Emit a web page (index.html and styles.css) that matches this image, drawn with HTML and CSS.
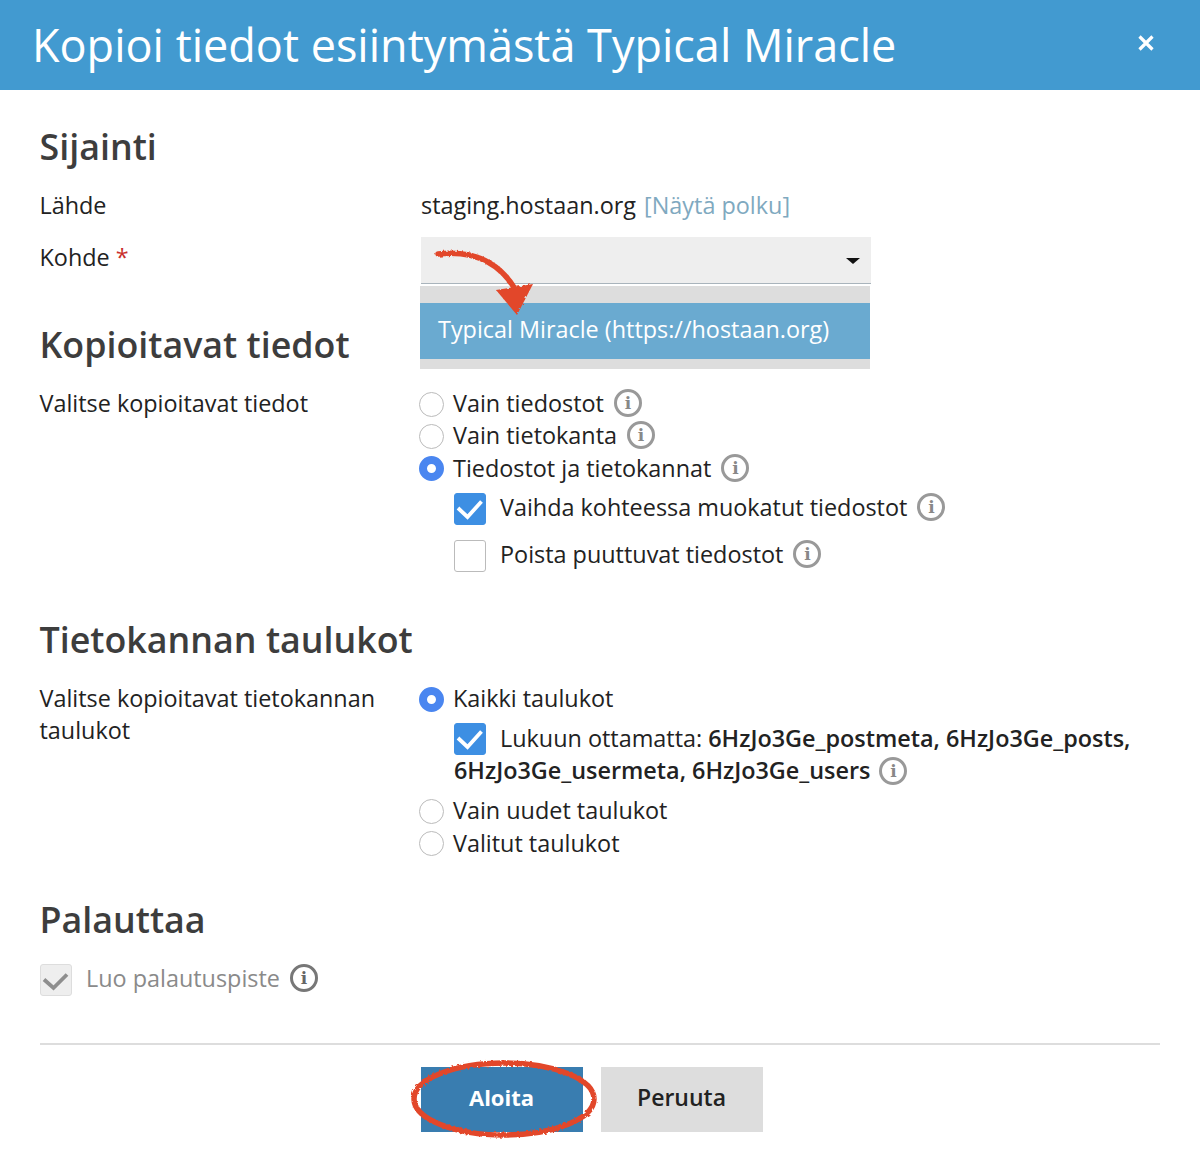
FILE: index.html
```html
<!DOCTYPE html>
<html lang="fi">
<head>
    <meta charset="UTF-8">
    <meta name="viewport" content="width=device-width, initial-scale=1.0">
    <title>Kopioi tiedot</title>
    <link rel="stylesheet" href="styles.css">
</head>
<body>
    <svg class="defs" width="0" height="0">
        <filter id="rough" x="-10%" y="-10%" width="120%" height="120%">
            <feTurbulence type="fractalNoise" baseFrequency="0.35" numOctaves="2" seed="4"/>
            <feDisplacementMap in="SourceGraphic" scale="3.500"/>
        </filter>
    </svg>
    <div class="modal">
        <header class="modal-head">
            <h1>Kopioi tiedot esiintymästä Typical Miracle</h1>
            <svg class="close" width="18" height="18" viewBox="0 0 18 18"><path d="M2.5 2.5l13 13M15.5 2.500l-13 13" stroke="#fff" stroke-width="3.200" fill="none"/></svg>
        </header>

        <div class="modal-body">
            <h2 class="first">Sijainti</h2>
            <div class="row source-row">
                <div class="label">Lähde</div>
                <div class="value">staging.hostaan.org <a class="path-link">[Näytä polku]</a></div>
            </div>
            <div class="row target-row">
                <div class="label">Kohde <span class="req">*</span></div>
                <div class="value">
                    <div class="select">
                        <span class="caret"></span>
                        <div class="dropdown">
                            <div class="option">Typical Miracle (https://hostaan.org)</div>
                        </div>
                        <svg class="arrow" width="110" height="84" viewBox="0 0 110 84">
                            <g filter="url(#rough)">
                                <path d="M7 15C35 12 65 18 84 50" stroke="#e2472a" stroke-width="5.500" stroke-linecap="round" fill="none"/>
                                <path d="M65 51L102 45L86 76Z" fill="#e2472a"/>
                            </g>
                        </svg>
                    </div>
                </div>
            </div>

            <h2 class="copy-head">Kopioitavat tiedot</h2>
            <div class="row">
                <div class="label">Valitse kopioitavat tiedot</div>
                <div class="value">
                    <div class="radio-line"><span class="radio"></span>Vain tiedostot<span class="info">i</span></div>
                    <div class="radio-line"><span class="radio"></span>Vain tietokanta<span class="info">i</span></div>
                    <div class="radio-line"><span class="radio on"></span>Tiedostot ja tietokannat<span class="info">i</span></div>
                    <div class="check-line">
                        <span class="check on"><svg width="32" height="32" viewBox="0 0 32 32"><path d="M4 15l9.500 9L27.500 8.500" stroke="#fff" stroke-width="3.800" fill="none"/></svg></span>
                        Vaihda kohteessa muokatut tiedostot<span class="info">i</span>
                    </div>
                    <div class="check-line">
                        <span class="check"></span>
                        Poista puuttuvat tiedostot<span class="info">i</span>
                    </div>
                </div>
            </div>

            <h2 class="tables-head">Tietokannan taulukot</h2>
            <div class="row">
                <div class="label">Valitse kopioitavat tietokannan taulukot</div>
                <div class="value">
                    <div class="radio-line"><span class="radio on"></span>Kaikki taulukot</div>
                    <div class="except">
                        <span class="check on"><svg width="32" height="32" viewBox="0 0 32 32"><path d="M4 15l9.500 9L27.500 8.500" stroke="#fff" stroke-width="3.800" fill="none"/></svg></span>Lukuun ottamatta: <b>6HzJo3Ge_postmeta, 6HzJo3Ge_posts,</b> <b>6HzJo3Ge_usermeta, 6HzJo3Ge_users</b><span class="info">i</span>
                    </div>
                    <div class="radio-line"><span class="radio"></span>Vain uudet taulukot</div>
                    <div class="radio-line"><span class="radio"></span>Valitut taulukot</div>
                </div>
            </div>

            <h2 class="restore-head">Palauttaa</h2>
            <div class="check-line disabled">
                <span class="check off"><svg width="32" height="32" viewBox="0 0 32 32"><path d="M4 15.500l9.500 8.500L27 10.500" stroke="#8e8e8e" stroke-width="3.800" fill="none"/></svg></span>
                Luo palautuspiste<span class="info">i</span>
            </div>
        </div>

        <footer class="modal-foot">
            <div class="start-wrap">
                <button class="btn primary">Aloita</button>
                <svg class="ring" width="192" height="84" viewBox="0 0 192 84">
                    <ellipse cx="96" cy="41" rx="90" ry="36" stroke="#e2472a" stroke-width="5.500" fill="none" filter="url(#rough)"/>
                </svg>
            </div>
            <button class="btn">Peruuta</button>
        </footer>
    </div>
</body>
</html>
```

FILE: styles.css
```css
*{
    margin: 0;
    padding: 0;
    box-sizing: border-box;
    font-family: 'Open Sans', sans-serif;
}
body{
    background-color: #fff;
    color: #222;
}
.defs{
    position: absolute;
}
.modal{
    width: 1200px;
    height: 1164px;
}
.modal-head{
    height: 90px;
    background-color: #429ad0;
    color: #fff;
    display: flex;
    justify-content: space-between;
    align-items: center;
    padding: 0 45px 2px 32px;
}
.modal-head h1{
    font-weight: 400;
    font-size: 45px;
}
.close{
    margin-bottom: 2px;
}
.modal-body{
    padding: 0 40px 0 39.500px;
}
h2{
    font-size: 35.800px;
    line-height: 48px;
    font-weight: 600;
    color: #3d3d3d;
}
h2.first{
    margin-top: 32px;
    margin-bottom: 19px;
}
h2.copy-head{
    margin-top: 32px;
    margin-bottom: 19px;
}
h2.tables-head{
    margin-top: 37px;
    margin-bottom: 19px;
}
h2.restore-head{
    margin-top: 36px;
    margin-bottom: 12px;
}
.row{
    display: flex;
    font-size: 23.400px;
    line-height: 32px;
}
.source-row{
    height: 52px;
}
.target-row{
    height: 47px;
}
.label{
    width: 381.500px;
    flex-shrink: 0;
    padding-right: 20px;
}
.value{
    flex: 1;
}
.path-link{
    color: #7fa9c0;
    margin-left: 2px;
}
.req{
    color: #c9302c;
}
.select{
    position: relative;
    width: 450px;
    height: 47px;
    margin-top: -4px;
    background-color: #eee;
    border-bottom: 1px solid #a9b4bc;
}
.caret{
    position: absolute;
    right: 11px;
    top: 21px;
    border-left: 7px solid transparent;
    border-right: 7px solid transparent;
    border-top: 6px solid #111;
}
.dropdown{
    position: absolute;
    left: -1px;
    top: 49px;
    width: 450px;
    height: 83px;
    padding: 17px 0 10px;
    background-color: #ddd;
}
.option{
    height: 56px;
    line-height: 53px;
    padding-left: 18px;
    background-color: #6aaad0;
    color: #fff;
}
.arrow{
    position: absolute;
    left: 10px;
    top: 2px;
}
.radio-line{
    display: flex;
    align-items: center;
    height: 32.300px;
}
.radio{
    width: 25px;
    height: 25px;
    border-radius: 50%;
    border: 1px solid #bbb;
    background-color: #fff;
    margin: 2px 9px 0 -2px;
    flex-shrink: 0;
}
.radio.on{
    border: 8px solid #4a86f0;
}
.info{
    display: inline-block;
    width: 28px;
    height: 28px;
    line-height: 23px;
    border: 3px solid #999;
    border-radius: 50%;
    margin-left: 10px;
    text-align: center;
    color: #888;
    font-family: 'DejaVu Serif', serif;
    font-size: 17px;
    font-weight: 700;
    flex-shrink: 0;
}
.check-line{
    display: flex;
    align-items: center;
    height: 47px;
    margin-left: 33px;
    font-size: 23.400px;
}
.check-line .check{
    margin-top: 3px;
}
.check{
    display: inline-block;
    width: 32px;
    height: 32px;
    border: 1px solid #bbb;
    border-radius: 3px;
    margin-right: 14px;
    background-color: #fff;
    flex-shrink: 0;
    vertical-align: top;
}
.check svg{
    display: block;
    margin: -1px;
}
.check.on{
    background-color: #3d8fe3;
    border-color: #3d8fe3;
}
.check.off{
    background-color: #eee;
    border-color: #ddd;
}
.except{
    margin-left: 33px;
    margin-top: 8px;
    margin-bottom: 8px;
}
.except .check{
    position: relative;
    top: 1px;
}
.except b{
    font-weight: 600;
}
.except .info{
    vertical-align: 2px;
    margin: -4px 0 -4px 9px;
    line-height: 22px;
}
.disabled{
    margin-left: 0.500px;
    color: #8a8a8a;
}
.disabled .info{
    border-color: #777;
    color: #666;
}
.modal-foot{
    margin: 41px 40px 0;
    padding-top: 22px;
    padding-right: 17px;
    border-top: 2px solid #ddd;
    display: flex;
    justify-content: center;
    gap: 18px;
}
.start-wrap{
    position: relative;
}
.btn{
    display: block;
    width: 162px;
    height: 65px;
    padding-bottom: 4px;
    border: none;
    background-color: #ddd;
    color: #222;
    font-size: 23px;
    font-weight: 600;
}
.btn.primary{
    background-color: #397db0;
    color: #fff;
    font-size: 22px;
    font-weight: 700;
}
.ring{
    position: absolute;
    left: -13px;
    top: -9px;
}
```
